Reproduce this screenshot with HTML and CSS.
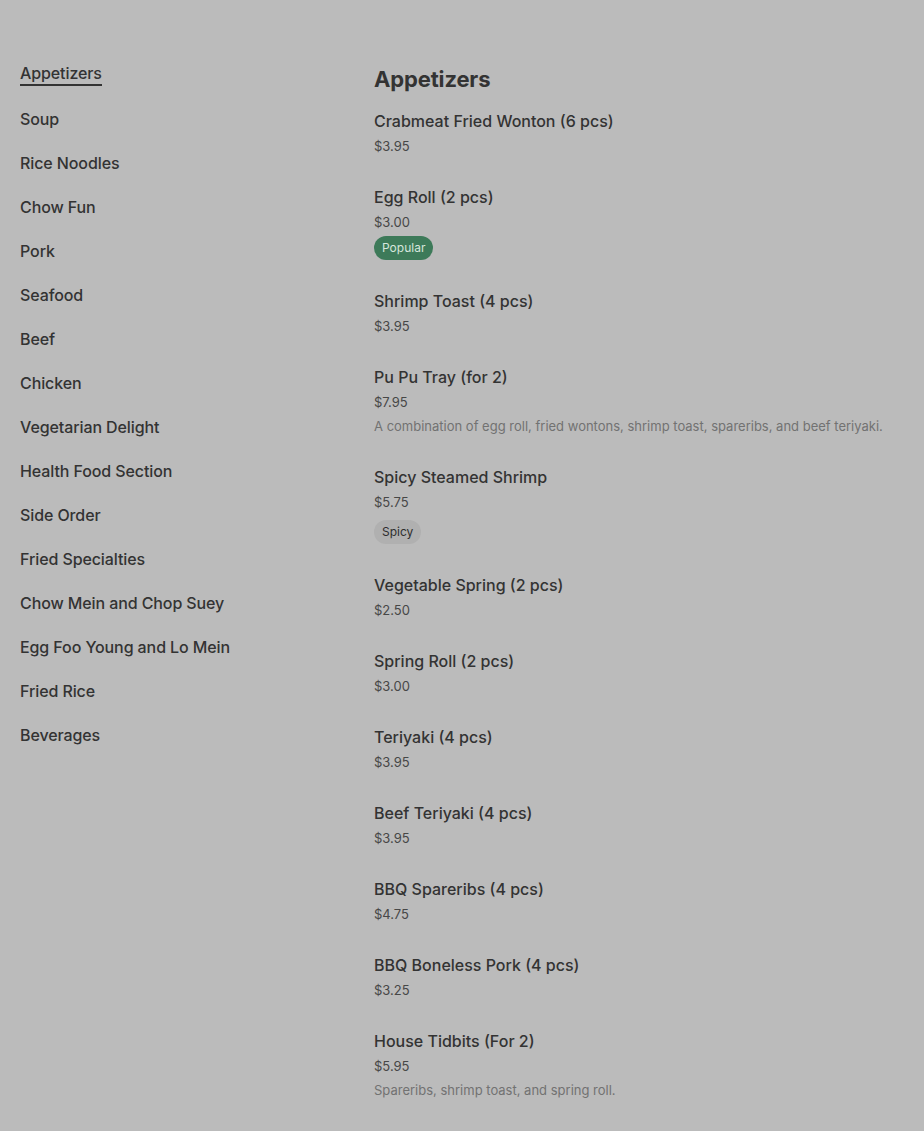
FILE: index.html
```html
<!DOCTYPE html>
<html>
<head>
<meta charset="utf-8">
<link rel="stylesheet" href="styles.css">
</head>
<body>
<div class="page">
  <nav class="nav">
    <a class="nav-item active">Appetizers</a>
    <a class="nav-item">Soup</a>
    <a class="nav-item">Rice Noodles</a>
    <a class="nav-item">Chow Fun</a>
    <a class="nav-item">Pork</a>
    <a class="nav-item">Seafood</a>
    <a class="nav-item">Beef</a>
    <a class="nav-item">Chicken</a>
    <a class="nav-item">Vegetarian Delight</a>
    <a class="nav-item">Health Food Section</a>
    <a class="nav-item">Side Order</a>
    <a class="nav-item">Fried Specialties</a>
    <a class="nav-item">Chow Mein and Chop Suey</a>
    <a class="nav-item">Egg Foo Young and Lo Mein</a>
    <a class="nav-item">Fried Rice</a>
    <a class="nav-item">Beverages</a>
  </nav>
  <main class="menu">
    <h2 class="section-title">Appetizers</h2>
    <div class="item"><div class="name">Crabmeat Fried Wonton (6 pcs)</div><div class="price">$3.95</div></div>
    <div class="item"><div class="name">Egg Roll (2 pcs)</div><div class="price">$3.00</div><span class="badge popular">Popular</span></div>
    <div class="item"><div class="name">Shrimp Toast (4 pcs)</div><div class="price">$3.95</div></div>
    <div class="item"><div class="name">Pu Pu Tray (for 2)</div><div class="price">$7.95</div><div class="desc">A combination of egg roll, fried wontons, shrimp toast, spareribs, and beef teriyaki.</div></div>
    <div class="item"><div class="name">Spicy Steamed Shrimp</div><div class="price">$5.75</div><div class="tags"><span class="badge spicy">Spicy</span></div></div>
    <div class="item"><div class="name">Vegetable Spring (2 pcs)</div><div class="price">$2.50</div></div>
    <div class="item"><div class="name">Spring Roll (2 pcs)</div><div class="price">$3.00</div></div>
    <div class="item"><div class="name">Teriyaki (4 pcs)</div><div class="price">$3.95</div></div>
    <div class="item"><div class="name">Beef Teriyaki (4 pcs)</div><div class="price">$3.95</div></div>
    <div class="item"><div class="name">BBQ Spareribs (4 pcs)</div><div class="price">$4.75</div></div>
    <div class="item"><div class="name">BBQ Boneless Pork (4 pcs)</div><div class="price">$3.25</div></div>
    <div class="item"><div class="name">House Tidbits (For 2)</div><div class="price">$5.95</div><div class="desc">Spareribs, shrimp toast, and spring roll.</div></div>
  </main>
</div>
</body>
</html>
```
FILE: styles.css
```css
html, body {
  margin: 0;
  padding: 0;
  background: #bbbbbb;
  color: #333333;
  font-family: "Inter", "Roboto", "Liberation Sans", sans-serif;
  overflow: hidden;
}
.page {
  display: grid;
  grid-template-columns: 354px 1fr;
  padding-left: 20px;
}
.nav {
  display: flex;
  flex-direction: column;
  align-items: flex-start;
  padding-top: 62px;
}
.nav-item {
  font-size: 16px;
  font-weight: 500;
  line-height: 24px;
  color: #333333;
  margin-bottom: 20px;
  letter-spacing: -0.1px;
}
.nav-item.active {
  border-bottom: 2px solid #333333;
  line-height: 22px;
  margin-bottom: 21px;
}
.menu {
  padding-top: 63px;
}
.section-title {
  margin: 0 0 14px 0;
  font-size: 22px;
  line-height: 32px;
  font-weight: 700;
  letter-spacing: -0.15px;
  color: #333333;
}
.item {
  display: flex;
  flex-direction: column;
  align-items: flex-start;
  padding-bottom: 29px;
}
.name {
  font-size: 16px;
  font-weight: 500;
  line-height: 24px;
  color: #333333;
}
.price {
  margin-top: 3px;
  font-size: 13px;
  line-height: 20px;
  color: #474747;
}
.desc {
  margin-top: 4px;
  font-size: 13px;
  line-height: 20px;
  color: #727272;
}
.tags {
  margin-top: 8px;
  display: flex;
  gap: 6px;
}
.badge {
  display: inline-block;
  height: 24px;
  line-height: 24px;
  padding: 0 8px;
  border-radius: 12px;
  font-size: 12px;
}
.badge.popular {
  margin-top: 4px;
  background: #3d7a59;
  color: #d6e6dc;
}
.badge.spicy {
  background: #b0b0b0;
  color: #2e2e2e;
}
```
